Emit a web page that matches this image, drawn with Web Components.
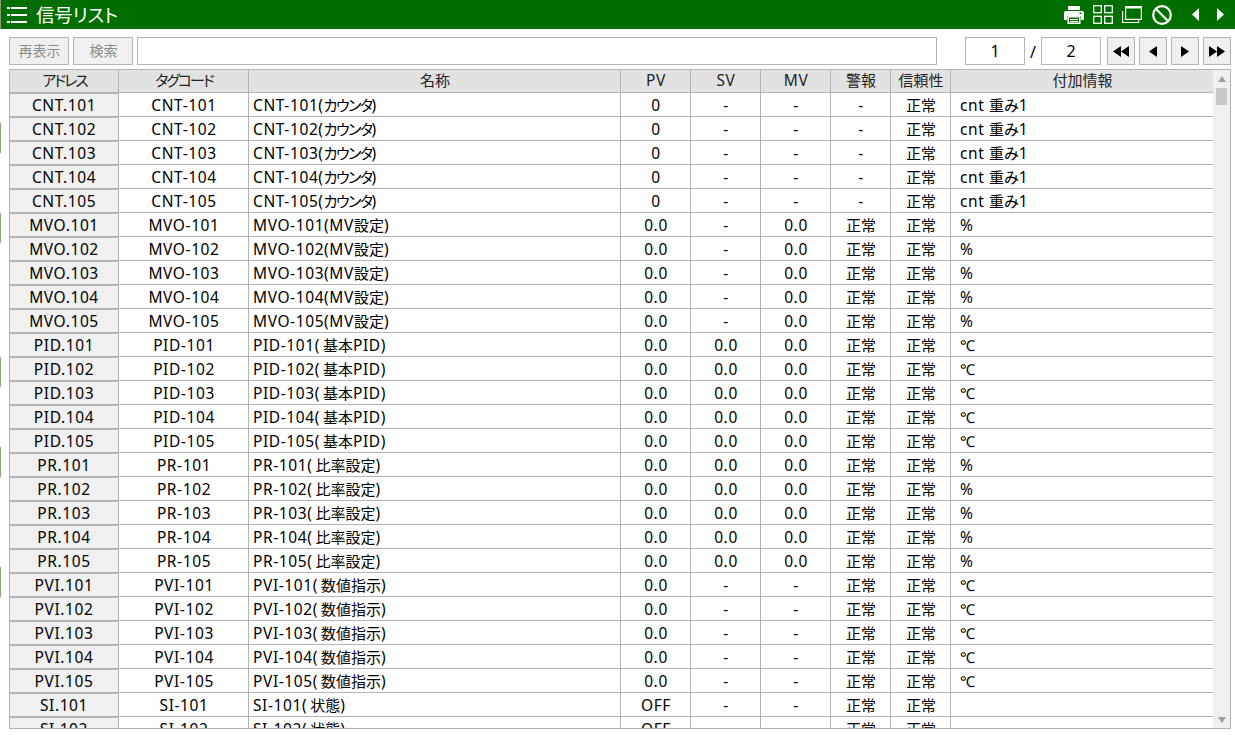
<!DOCTYPE html>
<html lang="ja"><head><meta charset="utf-8"><title>信号リスト</title>
<style>html,body{margin:0;height:100%;background:#fff;overflow:hidden}</style></head>
<body><sig-app></sig-app>
<script>
const FONT='"Noto Sans","Noto Sans CJK JP",sans-serif';
const I={
 print:'<svg width="20" height="18" viewBox="0 0 20 18"><path fill="#fff" d="M4 0h12v4H4zM2 5h16a2 2 0 0 1 2 2v7h-3v-4H3v4H0V7a2 2 0 0 1 2-2z"/><path fill="none" stroke="#fff" stroke-width="1.5" d="M4.2 10.8h11.6v6.4H4.2z"/><path stroke="#fff" d="M6 13.5h8M6 15.5h8"/><rect x="15.500" y="6.500" width="2" height="1.500" fill="#006f00"/></svg>',
 grid:'<svg width="20" height="19" viewBox="0 0 20 19" fill="none" stroke="#fff" stroke-width="1.300"><rect x=".7" y=".7" width="7.600" height="7"/><rect x="11.700" y=".7" width="7.600" height="7"/><rect x=".7" y="11.300" width="7.600" height="7"/><rect x="11.700" y="11.300" width="7.600" height="7"/></svg>',
 win:'<svg width="20" height="17" viewBox="0 0 20 17" fill="none" stroke="#fff" stroke-width="1.200"><path d="M1 5.500H.6v11h16v-2"/><rect x="3.600" y=".6" width="15.800" height="12.800"/><path d="M4 1.500h15" stroke-width="2"/></svg>',
 ban:'<svg width="20" height="20" viewBox="0 0 20 20" fill="none" stroke="#fff" stroke-width="2.200"><circle cx="10" cy="10" r="8.800"/><path d="M3.800 3.800l12.400 12.400"/></svg>',
 tl:'<svg width="7" height="13" viewBox="0 0 7 13"><path fill="#fff" d="M7 0v13L0 6.500z"/></svg>',
 tr:'<svg width="7" height="13" viewBox="0 0 7 13"><path fill="#fff" d="M0 0v13l7-6.500z"/></svg>',
 first:'<svg width="16" height="11" viewBox="0 0 16 11"><path d="M8 0v11L0 5.500zM16 0v11L8 5.500z"/></svg>',
 prev:'<svg width="8" height="11" viewBox="0 0 8 11"><path d="M8 0v11L0 5.500z"/></svg>',
 next:'<svg width="8" height="11" viewBox="0 0 8 11"><path d="M0 0v11l8-5.500z"/></svg>',
 last:'<svg width="16" height="11" viewBox="0 0 16 11"><path d="M0 0v11l8-5.500zM8 0v11l8-5.500z"/></svg>'
};
function el(name,html){customElements.define(name,class extends HTMLElement{
 constructor(){super();this.attachShadow({mode:'open'}).innerHTML=html;}
});}
class SigIcon extends HTMLElement{connectedCallback(){if(!this.shadowRoot){this.attachShadow({mode:'open'}).innerHTML=`<style>:host{display:inline-flex;align-items:center;justify-content:center}svg{display:block}</style>${I[this.getAttribute('name')]}`;}}}
customElements.define('sig-icon',SigIcon);
el('sig-titlebar',`<style>
:host{display:flex;align-items:center;height:29px;background:#006f00;color:#fff;border-left:1px solid #8a9a7a;box-sizing:border-box;font:18.500px/29px ${FONT};}
.menu{display:grid;grid-template-columns:3px 16px;column-gap:1px;row-gap:5px;margin-left:6px;width:20px}
.menu i{height:2px;background:#fff;display:block}
h1{font:inherit;margin:0 0 0 9px;font-feature-settings:"palt";letter-spacing:-.2px}
.tools{margin-left:auto;display:flex;align-items:center;height:29px}
</style><div class="menu"><i></i><i></i><i></i><i></i><i></i><i></i></div><h1>信号リスト</h1>
<div class="tools"><sig-icon name="print" style="margin-right:9px"></sig-icon><sig-icon name="grid" style="margin-right:9px"></sig-icon><sig-icon name="win" style="margin-right:10px"></sig-icon><sig-icon name="ban" style="margin-right:20px"></sig-icon><sig-icon name="tl" style="margin-right:18px"></sig-icon><sig-icon name="tr" style="margin-right:11px"></sig-icon></div>`);
el('sig-button',`<style>:host{display:inline-flex;align-items:center;justify-content:center;box-sizing:border-box;height:28px;border:1px solid #b4b4b4;background:#f0f0f0;color:#8c8c8c;font:14px/18px ${FONT};padding:0 0 0 1px}</style><slot></slot>`);
el('sig-field',`<style>:host{display:flex;align-items:center;justify-content:center;box-sizing:border-box;height:28px;border:1px solid #b4b4b4;background:#fff;color:#000;font:16px/18px ${FONT};}</style><slot></slot>`);
el('sig-toolbar',`<style>:host{display:flex;align-items:center;height:28px;margin:8px 4px 4px 9px;font:16px/18px ${FONT}}
sig-button.t{width:60px;margin-right:4px}sig-field.s{width:800px}
.pg{width:60px}.sl{width:16px;text-align:center;color:#000;position:relative;top:1px}
.nav{width:28px;margin-left:4px;padding:0}.nav.f{margin-left:6px}
.s{margin-right:28px}
</style><sig-button class="t">再表示</sig-button><sig-button class="t">検索</sig-button><sig-field class="s"></sig-field>
<sig-field class="pg">1</sig-field><span class="sl">/</span><sig-field class="pg">2</sig-field>
<sig-button class="nav f"><sig-icon name="first"></sig-icon></sig-button><sig-button class="nav"><sig-icon name="prev"></sig-icon></sig-button><sig-button class="nav"><sig-icon name="next"></sig-icon></sig-button><sig-button class="nav"><sig-icon name="last"></sig-icon></sig-button>`);
const COLS='109px 130px 372px 70px 70px 70px 60px 60px 262px';
const wrap=t=>t.replace(/\(([\u4e00-\u9fff])/g,'(<b class="g"></b>$1').replace(/[\u3040-\u30ff\u4e00-\u9fff\u2103]+/g,m=>`<span class="j${/[\u30a0-\u30ff]/.test(m)?' q':''}">${m}</span>`);
customElements.define('sig-row',class extends HTMLElement{
 set cells(v){const head=this.hasAttribute('head');
  const r=this.shadowRoot||this.attachShadow({mode:'open'});
  r.innerHTML=`<style>
  :host{display:grid;grid-template-columns:${COLS};height:${head?23:24}px;box-sizing:border-box;border-bottom:1px solid #b4b4b4;background:${head?'#e2e2e2':'#fff'};color:${head?'#222':'#000'};line-height:18px;letter-spacing:.6px}
  div{box-sizing:border-box;border-right:1px solid #b4b4b4;display:flex;align-items:center;justify-content:center;white-space:nowrap;overflow:hidden;padding-bottom:${head?2:0}px;padding-left:1px}
  div:last-child{border-right:0}
  .j{font-size:15px;letter-spacing:0;font-feature-settings:"palt"}
  .q{letter-spacing:${head?-2:-1.5}px}
  .g{display:inline-block;width:3px}
  .l{justify-content:flex-start;padding-left:4px}
  .x{padding-left:9px}
  .k{background:#f0f0f0;border-top:1px solid #b4b4b4;padding:0}
  p{margin:0;white-space:nowrap}
  </style>`+v.map((t,i)=>`<div class="${!head&&i==0?'k':''} ${!head&&i==2?'l':''} ${!head&&i==8?'l x':''}"><p>${wrap(t)}</p></div>`).join('');
 }
});
el('sig-scrollbar',`<style>:host{display:flex;flex-direction:column;align-items:center;width:17px;background:#f0f0f0;flex:none}
.u{margin-top:6px;width:0;height:0;border:4px solid transparent;border-top:0;border-bottom:6px solid #a0a0a0}
.th{width:11px;height:17px;background:#c8c8c8;margin-top:6px}
.d{margin-top:auto;margin-bottom:5px;width:0;height:0;border:4px solid transparent;border-bottom:0;border-top:6px solid #a0a0a0}
</style><div class="u"></div><div class="th"></div><div class="d"></div>`);
const groups=[
 ['CNT','カウンタ',5,'0','-','-','-','cnt 重み1'],
 ['MVO','MV設定',5,'0.0','-','0.0','正常','%'],
 ['PID','基本PID',5,'0.0','0.0','0.0','正常','℃'],
 ['PR','比率設定',5,'0.0','0.0','0.0','正常','%'],
 ['PVI','数値指示',5,'0.0','-','-','正常','℃'],
 ['SI','状態',2,'OFF','-','-','正常','']];
customElements.define('sig-grid',class extends HTMLElement{
 constructor(){super();const r=this.attachShadow({mode:'open'});
  r.innerHTML=`<style>:host{display:flex;flex:none;height:660px;box-sizing:border-box;border:1px solid #b4b4b4;margin:0 4px 0 9px;overflow:hidden;font:15.500px/18px ${FONT}}
  .t{flex:1;min-width:0;overflow:hidden;display:block}</style><div class="t"></div><sig-scrollbar></sig-scrollbar>`;
  const t=r.querySelector('.t');
  const add=(cells,head)=>{const x=document.createElement('sig-row');if(head)x.setAttribute('head','');t.append(x);x.cells=cells;};
  add(['アドレス','タグコード','名称','PV','SV','MV','警報','信頼性','付加情報'],true);
  for(const [p,n,c,pv,sv,mv,al,ex] of groups)for(let i=1;i<=c;i++){const k=100+i;
   add([`${p}.${k}`,`${p}-${k}`,`${p}-${k}(${n})`,pv,sv,mv,al,'正常',ex]);}
 }});
el('sig-app',`<style>:host{display:block;position:relative;height:735px;background:#fff}
.m{position:absolute;left:0;width:1px;background:#8aa878}
</style><sig-titlebar></sig-titlebar><sig-toolbar></sig-toolbar><sig-grid></sig-grid>
${[123,213,357,447,567].map(y=>`<i class="m" style="top:${y}px;height:30px"></i>`).join('')}`);
</script></body></html>
